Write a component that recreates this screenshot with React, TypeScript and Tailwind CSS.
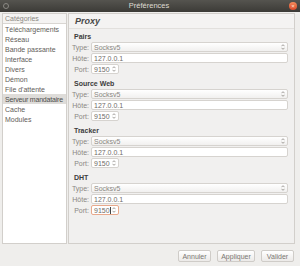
import React from "react"

const categories = [
  "Téléchargements",
  "Réseau",
  "Bande passante",
  "Interface",
  "Divers",
  "Démon",
  "File d'attente",
  "Serveur mandataire",
  "Cache",
  "Modules",
]

const sections = ["Pairs", "Source Web", "Tracker", "DHT"]

function Arrows() {
  return (
    <svg width="4" height="6" viewBox="0 0 4 6" className="shrink-0">
      <path d="M0.5 2.2 L2 0.7 L3.5 2.2" fill="none" stroke="#8a8782" strokeWidth="0.8" />
      <path d="M0.5 3.8 L2 5.3 L3.5 3.8" fill="none" stroke="#8a8782" strokeWidth="0.8" />
    </svg>
  )
}

function ProxyBlock({ title, focused }: { title: string; focused?: boolean }) {
  return (
    <div className="flex flex-col">
      <div className="h-[11px] pl-[5px] font-bold text-[7px] leading-[11px] text-[#3c3c3c]">{title}</div>
      <div className="flex flex-col gap-[1px]">
        <div className="flex items-center h-[10px]">
          <span className="w-[22px] text-right pr-[2px] text-[#8a8782]">Type:</span>
          <div className="flex-1 h-[10px] mr-[6px] flex items-center justify-between px-[2px] border border-[#d6d3cf] rounded-[2px] bg-gradient-to-b from-white to-[#f1f0ef] text-[#8a8782]">
            <span>Socksv5</span>
            <Arrows />
          </div>
        </div>
        <div className="flex items-center h-[10px]">
          <span className="w-[22px] text-right pr-[2px] text-[#8a8782]">Hôte:</span>
          <div className="flex-1 h-[10px] mr-[6px] flex items-center px-[2px] border border-[#d6d3cf] rounded-[2px] bg-white text-[#6f6c68]">
            127.0.0.1
          </div>
        </div>
        <div className="flex items-center h-[10px]">
          <span className="w-[22px] text-right pr-[2px] text-[#8a8782]">Port:</span>
          <div
            className={
              focused
                ? "w-[28px] h-[10px] flex items-center justify-between px-[2px] border border-[#e8a98c] rounded-[2px] bg-white text-[#6f6c68]"
                : "w-[28px] h-[10px] flex items-center justify-between px-[2px] border border-[#d6d3cf] rounded-[2px] bg-white text-[#6f6c68]"
            }
          >
            <span className="flex items-center">
              9150
              {focused && <span className="w-[1px] h-[7px] bg-[#444] ml-[0.5px]" />}
            </span>
            <Arrows />
          </div>
        </div>
      </div>
    </div>
  )
}

export default function App() {
  return (
    <div
      className="w-[300px] h-[266px] bg-[#efeeec] flex flex-col overflow-hidden text-[7px] leading-none"
      style={{ fontFamily: '"Liberation Sans", Arial, sans-serif' }}
    >
      {/* barre de titre */}
      <div className="h-[12px] shrink-0 flex items-center justify-between px-[3px] bg-gradient-to-b from-[#55544f] to-[#3c3b37]">
        <span className="w-[6px] h-[6px] rounded-full border border-[#8a8883]" />
        <span className="text-[7.5px] text-[#dfdbd2]">Préférences</span>
        <span className="w-[8px] h-[8px] rounded-full bg-gradient-to-b from-[#f38a5c] to-[#d9482a] flex items-center justify-center text-[6px] text-[#fbe2d6] leading-none">×</span>
      </div>

      <div className="flex-1 flex pl-[2px] pr-[5px] pt-[1px] pb-[2px]">
        {/* liste des catégories */}
        <div className="w-[65px] shrink-0 bg-white border border-[#d2cfcb] flex flex-col overflow-hidden">
          <div className="h-[10px] pl-[2px] flex items-center bg-[#f4f3f2] border-b border-[#d9d6d2] text-[#8a8782] text-[7px] whitespace-nowrap">
            Catégories
          </div>
          {categories.map((c) => (
            <div
              key={c}
              className={
                c === "Serveur mandataire"
                  ? "h-[10px] pl-[2px] flex items-center bg-[#dedcd9] text-[#4c4c4c] text-[7px] whitespace-nowrap tracking-[-0.2px]"
                  : "h-[10px] pl-[2px] flex items-center text-[#5f5d59] text-[7px] whitespace-nowrap"
              }
            >
              {c}
            </div>
          ))}
        </div>

        {/* panneau proxy */}
        <div className="flex-1 ml-[1px] border border-[#d2cfcb] bg-[#f1f0ef] flex flex-col">
          <div className="h-[15px] flex items-center pl-[6px] border-b border-[#e2e0dd] bg-[#f4f3f2]">
            <span className="font-bold italic text-[9px] text-[#4a4a4a]">Proxy</span>
          </div>
          <div className="flex flex-col gap-[4px] pt-[2px]">
            {sections.map((s) => (
              <ProxyBlock key={s} title={s} focused={s === "DHT"} />
            ))}
          </div>
        </div>
      </div>

      {/* boutons */}
      <div className="h-[20px] shrink-0 flex items-start justify-end gap-[6px] pr-[6px] pt-[4px]">
        {["Annuler", "Appliquer", "Valider"].map((b) => (
          <button
            key={b}
            className={
              b === "Appliquer"
                ? "h-[12px] w-[38px] border border-[#cfccc8] rounded-[2px] bg-gradient-to-b from-white to-[#eceae8] text-[#7a7773] text-[7px]"
                : "h-[12px] w-[33px] border border-[#cfccc8] rounded-[2px] bg-gradient-to-b from-white to-[#eceae8] text-[#7a7773] text-[7px]"
            }
          >
            {b}
          </button>
        ))}
      </div>
    </div>
  )
}
